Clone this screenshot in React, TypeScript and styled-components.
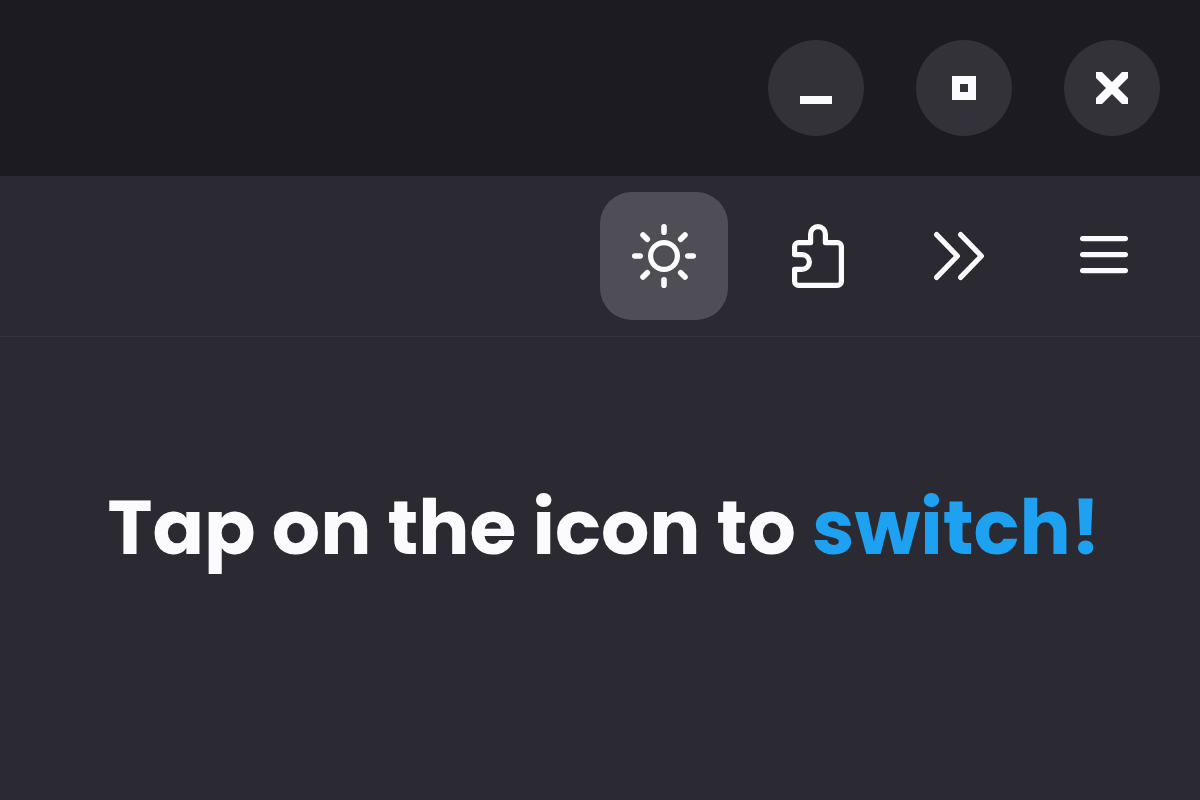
import React from "react";
import styled, { createGlobalStyle } from "styled-components";

const GlobalStyle = createGlobalStyle`
  * { box-sizing: border-box; }
  body { margin: 0; background: #2b2a33; }
`;

const Page = styled.div`
  display: flex;
  flex-direction: column;
  min-height: 100vh;
  color: #fbfbfe;
  background: #2b2a33;
  font-family: Poppins, Inter, "Liberation Sans", sans-serif;
`;

const TitleBar = styled.header`
  display: flex;
  justify-content: flex-end;
  gap: 52px;
  padding: 40px;
  background: #1c1b22;
`;

const WindowButton = styled.button`
  display: grid;
  place-items: center;
  width: 96px;
  height: 96px;
  padding: 0;
  border: 0;
  border-radius: 50%;
  color: inherit;
  background: #333238;
`;

const Toolbar = styled.nav`
  display: flex;
  justify-content: flex-end;
  gap: 20px;
  padding: 16px 28px;
  border-bottom: 1px solid #353439;
`;

const ToolButton = styled.button<{ $active?: boolean }>`
  display: grid;
  place-items: center;
  width: 128px;
  height: 128px;
  padding: 0;
  border: 0;
  border-radius: 32px;
  color: inherit;
  background: ${(p) => (p.$active ? "#4f4e57" : "transparent")};
`;

const WindowIcon = styled.svg`
  display: block;
  width: 32px;
  height: 32px;
  fill: currentColor;
`;

const ToolIcon = styled.svg`
  display: block;
  width: 64px;
  height: 64px;
  fill: none;
  stroke: currentColor;
  stroke-width: 5.2;
  stroke-linecap: round;
  stroke-linejoin: round;
`;

const Content = styled.main`
  display: flex;
  flex: 1;
  align-items: center;
  justify-content: center;
  padding: 0 32px 82px 40px;
`;

const Message = styled.h1`
  margin: 0;
  font-size: 76px;
  line-height: 112px;
  font-weight: 700;
  text-align: center;
`;

const Accent = styled.span`
  color: #1ea1f1;
`;

export default function App() {
  return (
    <Page>
      <GlobalStyle />
      <TitleBar>
        <WindowButton type="button" aria-label="Minimize">
          <WindowIcon viewBox="0 0 32 32" aria-hidden="true">
            <path d="M0 24h32v8H0z" />
          </WindowIcon>
        </WindowButton>
        <WindowButton type="button" aria-label="Maximize">
          <WindowIcon viewBox="0 0 32 32" aria-hidden="true">
            <path fillRule="evenodd" d="M4 4h24v24H4zM12 12v8h8v-8z" />
          </WindowIcon>
        </WindowButton>
        <WindowButton type="button" aria-label="Close">
          <WindowIcon viewBox="0 0 32 32" aria-hidden="true">
            <path d="M0 0H6L16 10L26 0H32V6L22 16L32 26V32H26L16 22L6 32H0V26L10 16L0 6Z" />
          </WindowIcon>
        </WindowButton>
      </TitleBar>
      <Toolbar aria-label="Browser tools">
        <ToolButton type="button" $active aria-label="Switch theme">
          <ToolIcon viewBox="0 0 64 64" aria-hidden="true">
            <circle cx="32" cy="32" r="13.4" />
            <path d="M32 2.8v5.4M32 55.8v5.4M2.8 32h5.4M55.8 32h5.4M11 11l4.3 4.3M48.7 48.7L53 53M53 11l-4.3 4.3M15.3 48.7L11 53" strokeWidth="5.6" />
          </ToolIcon>
        </ToolButton>
        <ToolButton type="button" aria-label="Extensions">
          <ToolIcon viewBox="0 0 64 64" aria-hidden="true">
            <path d="M14.6 30.6V22.6a4 4 0 0 1 4-4H30.6V10a7.4 7.4 0 0 1 14.8 0V18.6H57.4a4 4 0 0 1 4 4V57.4a4 4 0 0 1-4 4H18.6a4 4 0 0 1-4-4V45.4H22a7.4 7.4 0 0 0 0-14.8Z" />
          </ToolIcon>
        </ToolButton>
        <ToolButton type="button" aria-label="More tools">
          <ToolIcon viewBox="0 0 64 64" aria-hidden="true">
            <path d="M8.6 10.6L29.4 32L8.6 53.4M32.6 10.6L53.4 32L32.6 53.4" />
          </ToolIcon>
        </ToolButton>
        <ToolButton type="button" aria-label="Menu">
          <ToolIcon viewBox="0 0 64 64" aria-hidden="true">
            <path d="M6.6 14.6h42.8M6.6 30.6h42.8M6.6 46.6h42.8" />
          </ToolIcon>
        </ToolButton>
      </Toolbar>
      <Content>
        <Message>
          Tap on the icon to <Accent>switch!</Accent>
        </Message>
      </Content>
    </Page>
  );
}
